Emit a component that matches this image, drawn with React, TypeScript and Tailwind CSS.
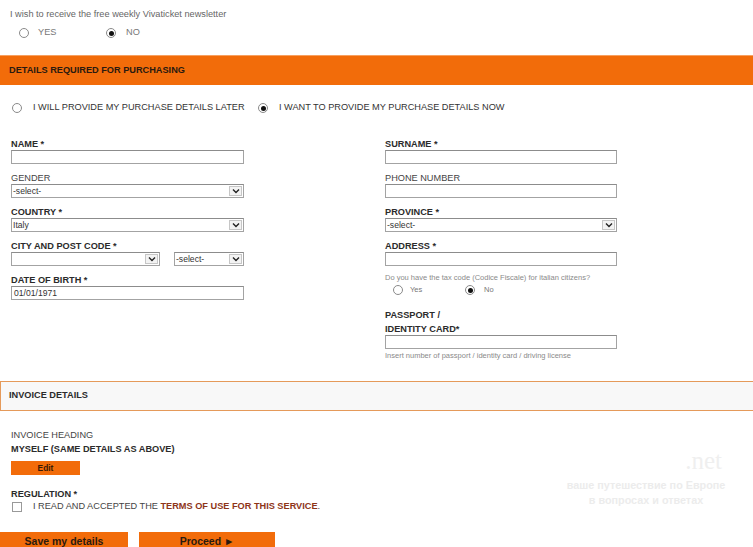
import React from 'react';

const ORANGE = 'bg-[#f26c0a]';

function Radio({ checked = false }: { checked?: boolean }) {
  return (
    <span className="flex h-[10px] w-[10px] shrink-0 items-center justify-center rounded-full border border-[#8a8a8a] bg-white">
      {checked && <span className="h-[5px] w-[5px] rounded-full bg-[#111]" />}
    </span>
  );
}

function TextInput({ value = '', className = '' }: { value?: string; className?: string }) {
  return (
    <div
      className={`flex h-[14px] items-center border border-[#a3a3a3] border-t-[#8c8c8c] bg-white pl-[2px] text-[8.6px] text-[#333] ${className}`}
    >
      {value}
    </div>
  );
}

function Select({ value = '', className = '' }: { value?: string; className?: string }) {
  return (
    <div
      className={`flex h-[14px] items-stretch border border-[#a3a3a3] border-t-[#8c8c8c] bg-white text-[8.6px] text-[#333] ${className}`}
    >
      <span className="flex flex-1 items-center pl-[1px]">{value}</span>
      <span className="m-[1px] flex w-[13px] items-center justify-center border border-[#c6c6c6] bg-[#f3f3f3]">
        <svg width="8" height="6" viewBox="0 0 8 6">
          <path d="M1 1.5 L4 4.5 L7 1.5" fill="none" stroke="#222" strokeWidth="1.4" />
        </svg>
      </span>
    </div>
  );
}

function Label({ children, bold = true }: { children: React.ReactNode; bold?: boolean }) {
  return (
    <div
      className={`h-[12px] pt-[1px] text-[9.2px] leading-[12px] ${
        bold ? 'font-bold text-[#2b2b2b]' : 'text-[#444]'
      }`}
    >
      {children}
    </div>
  );
}

function Field({ label, bold = true, children }: { label: string; bold?: boolean; children: React.ReactNode }) {
  return (
    <div className="flex flex-col gap-[1px]">
      <Label bold={bold}>{label}</Label>
      {children}
    </div>
  );
}

export default function App() {
  return (
    <div className="relative h-[547px] w-[753px] overflow-hidden bg-white font-['Liberation_Sans',Arial,sans-serif]">
      {/* newsletter opt-in */}
      <div className="pl-[10px] pt-[8px] text-[9.2px] leading-[12px] text-[#666]">
        I wish to receive the free weekly Vivaticket newsletter
      </div>
      <div className="mt-[7px] flex h-[12px] items-center pl-[19px] text-[9.2px] text-[#777]">
        <div className="flex w-[87px] items-center gap-[9px]">
          <Radio />
          <span>YES</span>
        </div>
        <div className="flex items-center gap-[10px]">
          <Radio checked />
          <span>NO</span>
        </div>
      </div>

      {/* purchase details header */}
      <div className={`mt-[16px] flex h-[30px] items-center border-t border-[#f7a060] pl-[9px] text-[9.2px] font-bold text-[#2a1a10] ${ORANGE}`}>
        DETAILS REQUIRED FOR PURCHASING
      </div>

      <div className="mt-[17px] flex h-[12px] items-center pl-[12px] text-[9.2px] text-[#333]">
        <div className="flex w-[246px] items-center gap-[11px]">
          <Radio />
          <span>I WILL PROVIDE MY PURCHASE DETAILS LATER</span>
        </div>
        <div className="flex items-center gap-[11px]">
          <Radio checked />
          <span>I WANT TO PROVIDE MY PURCHASE DETAILS NOW</span>
        </div>
      </div>

      {/* personal data, two columns */}
      <div className="mt-[23px] flex pl-[11px]">
        <div className="flex w-[233px] flex-col gap-[7px]">
          <Field label="NAME *">
            <TextInput />
          </Field>
          <Field label="GENDER" bold={false}>
            <Select value="-select-" />
          </Field>
          <Field label="COUNTRY *">
            <Select value="Italy" />
          </Field>
          <Field label="CITY AND POST CODE *">
            <div className="flex justify-between">
              <Select className="w-[149px]" />
              <Select value="-select-" className="w-[70px]" />
            </div>
          </Field>
          <Field label="DATE OF BIRTH *">
            <TextInput value="01/01/1971" />
          </Field>
        </div>

        <div className="ml-[141px] flex w-[232px] flex-col">
          <div className="flex flex-col gap-[7px]">
            <Field label="SURNAME *">
              <TextInput />
            </Field>
            <Field label="PHONE NUMBER" bold={false}>
              <TextInput />
            </Field>
            <Field label="PROVINCE *">
              <Select value="-select-" />
            </Field>
            <Field label="ADDRESS *">
              <TextInput />
            </Field>
          </div>
          <div className="mt-[7px] h-[10px] text-[7.5px] leading-[10px] text-[#8a8a8a]">
            Do you have the tax code (Codice Fiscale) for italian citizens?
          </div>
          <div className="mt-[1px] flex h-[12px] items-center pl-[8px] text-[7.5px] text-[#777]">
            <div className="flex w-[72px] items-center gap-[7px]">
              <Radio />
              <span>Yes</span>
            </div>
            <div className="flex items-center gap-[9px]">
              <Radio checked />
              <span>No</span>
            </div>
          </div>
          <div className="mt-[11px] pt-[1px] text-[9.2px] font-bold leading-[14px] text-[#2b2b2b]">
            PASSPORT /
            <br />
            IDENTITY CARD*
          </div>
          <TextInput className="-mt-[1px]" />
          <div className="mt-[2px] h-[10px] text-[7.5px] leading-[10px] text-[#8a8a8a]">
            Insert number of passport / identity card / driving license
          </div>
        </div>
      </div>

      {/* invoice section */}
      <div className="mt-[20px] flex h-[30px] items-center border-y border-l border-[#e59a5a] bg-[#f8f8f8] pl-[8px] text-[9.2px] font-bold text-[#2b2b2b]">
        INVOICE DETAILS
      </div>

      <div className="pl-[11px]">
        <div className="mt-[17px] text-[9.2px] leading-[14px] text-[#444]">INVOICE HEADING</div>
        <div className="text-[9.2px] font-bold leading-[14px] text-[#2b2b2b]">MYSELF (SAME DETAILS AS ABOVE)</div>
        <div className={`mt-[5px] flex h-[14px] w-[69px] items-center justify-center text-[8.4px] font-bold text-[#3a1a05] ${ORANGE}`}>
          Edit
        </div>
        <div className="mt-[12px] h-[12px] pt-[1px] text-[9.2px] font-bold leading-[12px] text-[#2b2b2b]">REGULATION *</div>
        <div className="mt-[2px] flex h-[12px] items-center gap-[11px] pl-[1px] text-[9.2px] text-[#444]">
          <span className="h-[10px] w-[10px] border border-[#999] bg-white" />
          <span>
            I READ AND ACCEPTED THE{' '}
            <span className="font-bold text-[#8e3518]">TERMS OF USE FOR THIS SERVICE</span>.
          </span>
        </div>
      </div>

      <div className="mt-[19px] flex gap-[11px]">
        <div className={`flex h-[20px] w-[128px] items-center justify-center text-[10.5px] font-bold text-[#2a1a10] ${ORANGE}`}>
          Save my details
        </div>
        <div className={`flex h-[20px] w-[136px] items-center justify-center text-[10.5px] font-bold text-[#2a1a10] ${ORANGE}`}>
          Proceed ►
        </div>
      </div>

      {/* faint site watermark in the corner */}
      <div className="pointer-events-none absolute left-[560px] top-[448px] flex w-[172px] flex-col items-center">
        <div className="self-end pr-[10px] font-['Liberation_Serif',serif] text-[25px] leading-[26px] text-[#efefef]">.net</div>
        <div className="mt-[4px] text-[10.8px] font-bold leading-[15px] text-[#ececec]">ваше путешествие по Европе</div>
        <div className="text-[10.8px] font-bold leading-[15px] text-[#ececec]">в вопросах и ответах</div>
      </div>
    </div>
  );
}
